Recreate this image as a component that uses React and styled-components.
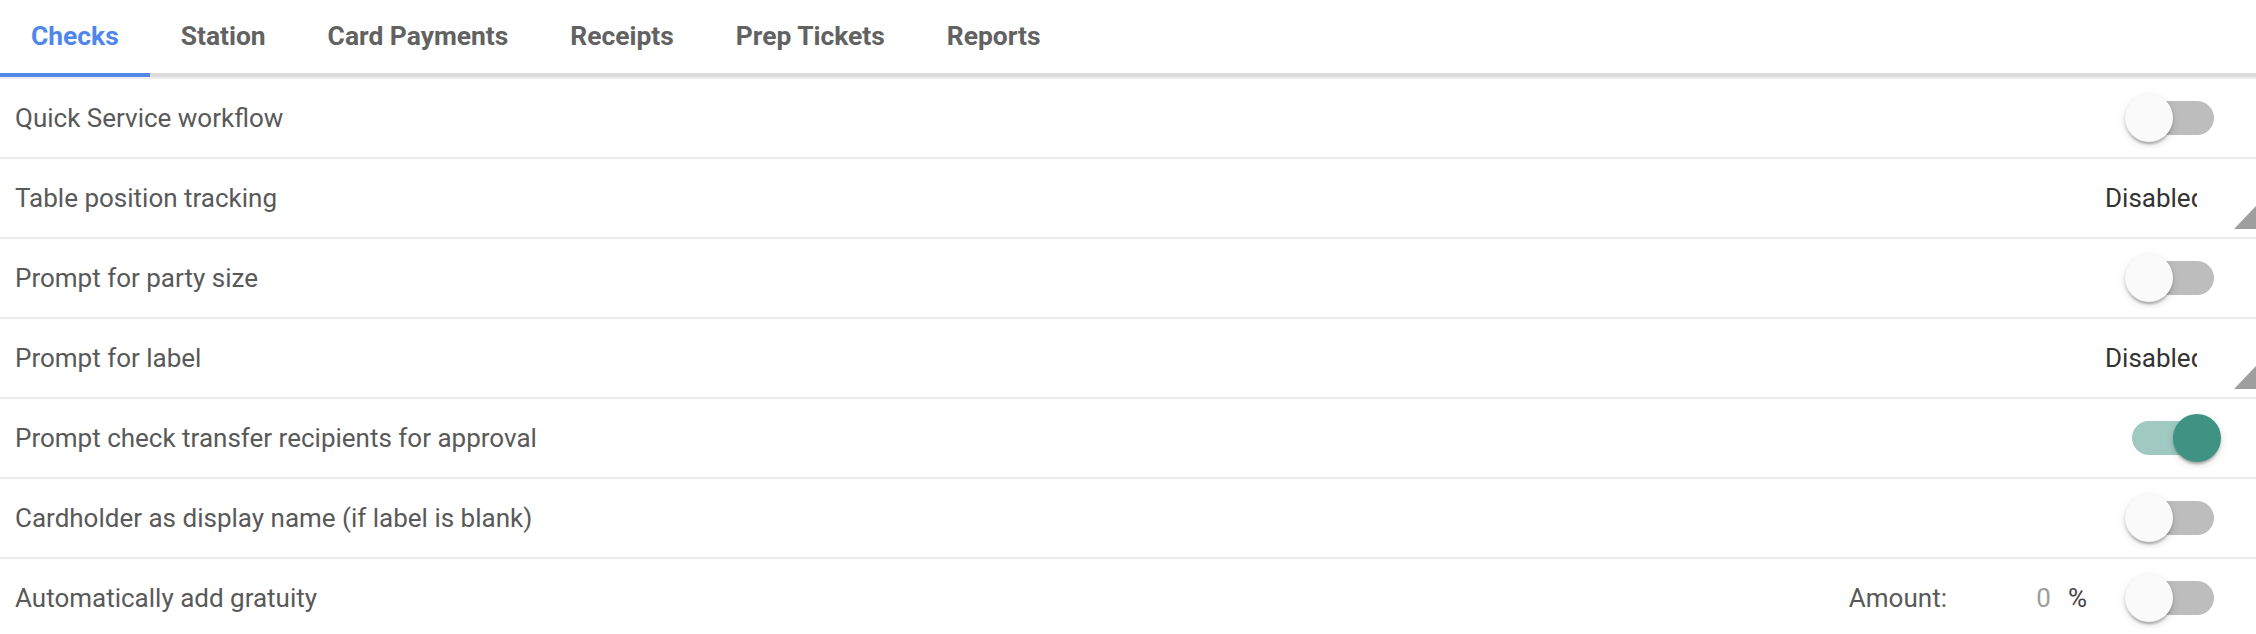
import React from 'react';
import styled, { createGlobalStyle } from 'styled-components';

const GlobalStyle = createGlobalStyle`
    html, body {
        margin: 0;
        padding: 0;
        background: #fff;
        font-family: Roboto, "Noto Sans", "Liberation Sans", sans-serif;
        overflow: hidden;
    }
`

const Page = styled.div`
    width: 2256px;
    height: 634px;
    overflow: hidden;
    background: #fff;
`

const TabBar = styled.div`
    display: flex;
    height: 77px;
    border-bottom: 2px solid #eeeeee;
`

const Tab = styled.div`
    display: flex;
    align-items: center;
    justify-content: center;
    min-width: 144px;
    padding: 0 31px 2px;
    box-sizing: border-box;
    font-size: 26.4px;
    font-weight: 700;
    color: ${p => p.$active ? '#4f86ec' : '#626262'};
    border-bottom: 4px solid ${p => p.$active ? '#5388ea' : '#dcdcdc'};
`

const TabFill = styled.div`
    flex: 1;
    border-bottom: 4px solid #dcdcdc;
`

const Row = styled.div`
    display: flex;
    align-items: center;
    height: 78px;
    padding-left: 15px;
    border-bottom: 2px solid #ebebeb;
`

const Label = styled.div`
    flex: 1;
    font-size: 26px;
    color: #595959;
`

const Controls = styled.div`
    display: flex;
    align-items: center;
    margin-right: 35px;
`

const Track = styled.span`
    position: relative;
    display: inline-block;
    width: 96px;
    height: 48px;
    &::before {
        content: '';
        position: absolute;
        left: 7px;
        top: 7px;
        width: 82px;
        height: 34px;
        border-radius: 17px;
        background: ${p => p.$on ? '#a0cac1' : '#bdbdbd'};
    }
`

const Thumb = styled.span`
    position: absolute;
    top: 0;
    left: ${p => p.$on ? '48px' : '0'};
    width: 48px;
    height: 48px;
    border-radius: 50%;
    background: ${p => p.$on ? '#3f9382' : '#fafafa'};
    box-shadow: 0 4px 3px -2px rgba(0,0,0,0.2), 0 2px 3px rgba(0,0,0,0.14), 0 3px 9px rgba(0,0,0,0.12);
`

const Select = styled.div`
    position: relative;
    width: 151px;
    height: 78px;
    display: flex;
    align-items: center;
    margin-right: -35px;
`

const SelectText = styled.span`
    width: 92px;
    overflow: hidden;
    white-space: nowrap;
    font-size: 26px;
    color: #333;
`

const Arrow = styled.span`
    position: absolute;
    right: 0;
    bottom: 8px;
    width: 22px;
    height: 23px;
    background: #9e9e9e;
    clip-path: polygon(100% 0, 100% 100%, 0 100%);
`

const AmountLabel = styled.span`
    font-size: 26px;
    color: #595959;
`

const AmountValue = styled.span`
    width: 104px;
    text-align: right;
    font-size: 26px;
    color: #9e9e9e;
`

const Percent = styled.span`
    margin-left: 17px;
    margin-right: 38px;
    font-size: 26px;
    color: #444;
`

function Switch({ on }) {
    return (
        <Track $on={on}>
            <Thumb $on={on} />
        </Track>
    )
}

const tabs = ['Checks', 'Station', 'Card Payments', 'Receipts', 'Prep Tickets', 'Reports']

const settings = [
    { label: 'Quick Service workflow', type: 'switch', on: false },
    { label: 'Table position tracking', type: 'select', value: 'Disabled' },
    { label: 'Prompt for party size', type: 'switch', on: false },
    { label: 'Prompt for label', type: 'select', value: 'Disabled' },
    { label: 'Prompt check transfer recipients for approval', type: 'switch', on: true },
    { label: 'Cardholder as display name (if label is blank)', type: 'switch', on: false },
    { label: 'Automatically add gratuity', type: 'gratuity', on: false },
]

export default function App() {
    return (
        <Page>
            <GlobalStyle />
            <TabBar>
                {tabs.map((t, i) => (
                    <Tab key={t} $active={i === 0}>{t}</Tab>
                ))}
                <TabFill />
            </TabBar>
            {settings.map(s => (
                <Row key={s.label}>
                    <Label>{s.label}</Label>
                    <Controls>
                        {s.type === 'select' && (
                            <Select>
                                <SelectText>{s.value}</SelectText>
                                <Arrow />
                            </Select>
                        )}
                        {s.type === 'gratuity' && (
                            <>
                                <AmountLabel>Amount:</AmountLabel>
                                <AmountValue>0</AmountValue>
                                <Percent>%</Percent>
                            </>
                        )}
                        {s.type !== 'select' && <Switch on={s.on} />}
                    </Controls>
                </Row>
            ))}
        </Page>
    )
}
